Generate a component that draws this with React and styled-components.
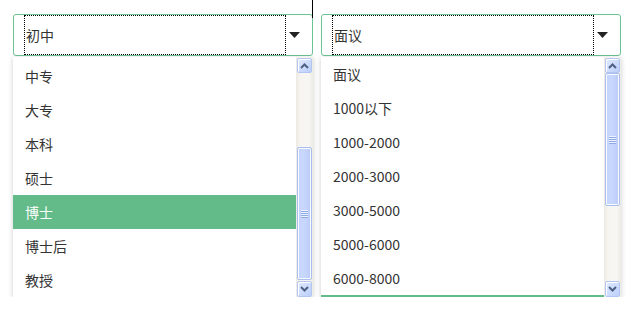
import React from "react";
import styled, { createGlobalStyle } from "styled-components";

const GlobalStyle = createGlobalStyle`
  html, body { margin: 0; padding: 0; background: #fff; }
  body { font-family: "Noto Sans CJK SC", "Noto Sans", sans-serif; }
`;

const ITEM_H = 34;
const LIST_H = 240;
const UP_H = 16;
const DOWN_H = 17;
const TRACK_H = LIST_H - UP_H - DOWN_H;

const Page = styled.div`
  display: flex;
  gap: 8px;
  padding: 14px 0 0 13px;
`;

const Column = styled.div`
  position: relative;
  width: 300px;
  display: flex;
  flex-direction: column;
  gap: 1px;
`;

const Caret = styled.div`
  position: absolute;
  left: 299px;
  top: -14px;
  width: 1px;
  height: 18px;
  background: #000;
`;

const SelectBox = styled.div`
  box-sizing: border-box;
  height: 42px;
  border: 1px solid #6cc293;
  border-radius: 3px;
  display: flex;
  align-items: stretch;
  padding-left: 10px;
  background: #fff;
`;

const FocusRing = styled.div`
  box-sizing: border-box;
  width: 262px;
  border: 1px dotted #000;
  display: flex;
  align-items: center;
  padding-left: 1px;
  font-size: 14px;
  color: #333;
`;

const ArrowBox = styled.div`
  display: flex;
  align-items: center;
  margin-left: 3px;
  padding-bottom: 1px;
`;

const Dropdown = styled.div`
  height: ${LIST_H}px;
  display: flex;
  background: #fff;
  box-shadow: 0 1px 5px rgba(0, 0, 0, 0.2);
`;

const Viewport = styled.div`
  flex: 1;
  overflow: hidden;
  display: flex;
  flex-direction: column;
`;

const Item = styled.div`
  flex: none;
  height: ${ITEM_H}px;
  line-height: ${ITEM_H}px;
  padding-left: 12px;
  font-size: 14px;
  color: ${(p) => (p.$active ? "#fff" : "#333")};
  background: ${(p) => (p.$active ? "#62bb88" : "#fff")};
  white-space: nowrap;
`;

const PartialItem = styled.div`
  flex: none;
  background: ${(p) => (p.$active ? "#62bb88" : "#fff")};
`;

const ScrollBar = styled.div`
  width: 17px;
  display: flex;
  flex-direction: column;
  background: linear-gradient(to right, #eceae2, #f6f5f1 25%, #f7f6f2 75%, #ecebe4);
`;

const ScrollButton = styled.div`
  box-sizing: border-box;
  height: ${(p) => p.$h}px;
  margin: 1px 1px 0 1px;
  border: 1px solid #b2c5f3;
  border-radius: 2px;
  background: linear-gradient(135deg, #e0e9fe, #bccffa);
  box-shadow: inset 1px 1px 0 #fff;
  display: flex;
  align-items: center;
  justify-content: center;
`;

const Track = styled.div`
  height: ${TRACK_H}px;
  display: flex;
  flex-direction: column;
`;

const Thumb = styled.div`
  box-sizing: border-box;
  margin: 0 1px;
  border: 1px solid #a9bff2;
  border-radius: 2px;
  background: linear-gradient(to right, #c3d3fc, #c9d8fd 40%, #b9cbf8);
  box-shadow: 0 0 0 1px #fbfbfd inset;
  display: flex;
  align-items: center;
  justify-content: center;
`;

const Grip = styled.div`
  width: 7px;
  height: 8px;
  background: repeating-linear-gradient(
    to bottom,
    #eef3ff 0px,
    #eef3ff 1px,
    #8ea9e8 1px,
    #8ea9e8 2px
  );
`;

function Chevron({ up }) {
  return (
    <svg width="9" height="6" viewBox="0 0 9 6">
      <polyline
        points={up ? "1,5 4.5,1.5 8,5" : "1,1 4.5,4.5 8,1"}
        fill="none"
        stroke="#4d6185"
        strokeWidth="2"
      />
    </svg>
  );
}

function Triangle() {
  return (
    <svg width="11" height="6" viewBox="0 0 11 6">
      <polygon points="0,0 11,0 5.5,6" fill="#222" />
    </svg>
  );
}

function Select({ value, items, active, atBottom, caret }) {
  const total = items.length * ITEM_H;
  const offset = atBottom ? total - LIST_H : 0;
  const thumbH = Math.round((TRACK_H * LIST_H) / total);
  const thumbTop = Math.round(((TRACK_H - thumbH) * offset) / (total - LIST_H));

  // only render what lies in the viewport; partly visible rows become strips
  const rows = [];
  items.forEach((t, i) => {
    const top = i * ITEM_H - offset;
    const bottom = top + ITEM_H;
    if (bottom <= 0 || top >= LIST_H) return;
    if (top >= 0 && bottom <= LIST_H) {
      rows.push(
        <Item key={t} $active={i === active}>
          {t}
        </Item>
      );
    } else {
      const h = Math.min(bottom, LIST_H) - Math.max(top, 0);
      rows.push(<PartialItem key={t} $active={i === active} style={{ height: h }} />);
    }
  });

  return (
    <Column>
      {caret && <Caret />}
      <SelectBox>
        <FocusRing>{value}</FocusRing>
        <ArrowBox>
          <Triangle />
        </ArrowBox>
      </SelectBox>
      <Dropdown>
        <Viewport>{rows}</Viewport>
        <ScrollBar>
          <ScrollButton $h={UP_H - 1}>
            <Chevron up />
          </ScrollButton>
          <Track>
            <div style={{ height: thumbTop, flex: "none" }} />
            <Thumb style={{ height: thumbH }}>
              <Grip />
            </Thumb>
          </Track>
          <ScrollButton $h={DOWN_H - 1}>
            <Chevron />
          </ScrollButton>
        </ScrollBar>
      </Dropdown>
    </Column>
  );
}

const edu = ["不限", "小学", "初中", "高中", "中专", "大专", "本科", "硕士", "博士", "博士后", "教授"];
const pay = [
  "面议",
  "1000以下",
  "1000-2000",
  "2000-3000",
  "3000-5000",
  "5000-6000",
  "6000-8000",
  "8000-10000",
  "10000-15000",
  "15000-20000",
  "20000以上",
];

export default function App() {
  return (
    <>
      <GlobalStyle />
      <Page>
        <Select value="初中" items={edu} active={8} atBottom caret />
        <Select value="面议" items={pay} active={7} />
      </Page>
    </>
  );
}
